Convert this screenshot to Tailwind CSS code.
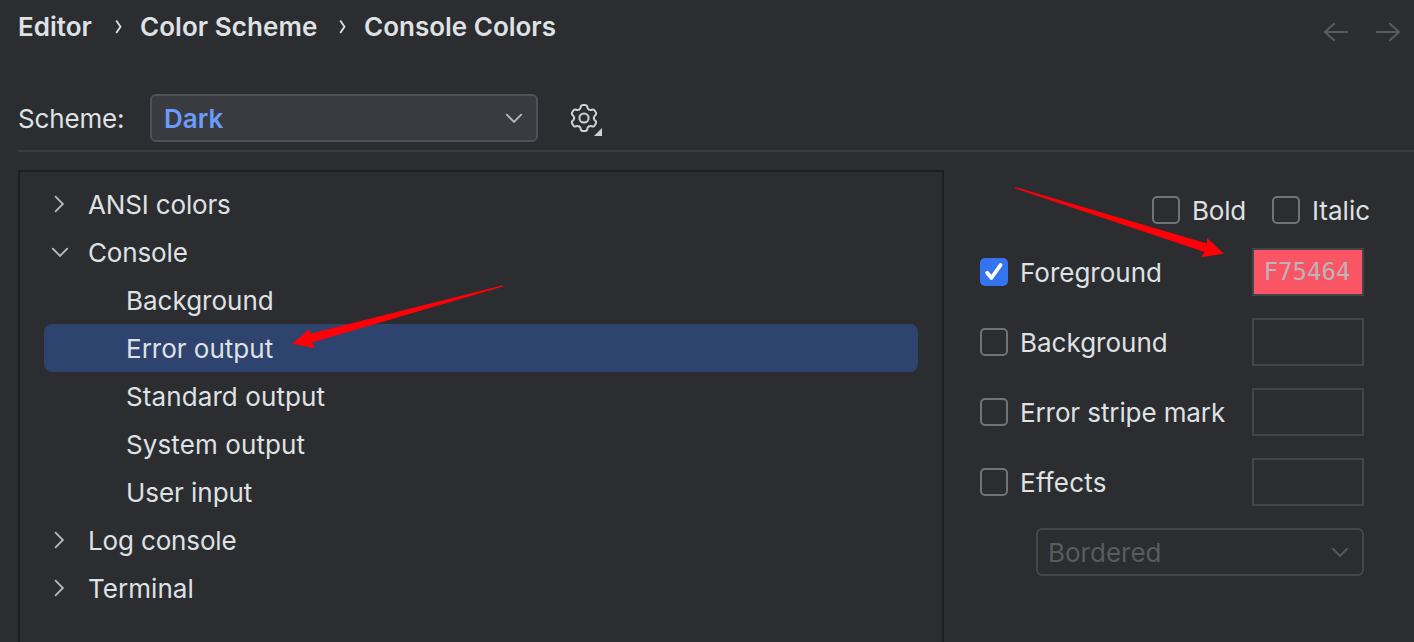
<!DOCTYPE html>
<html lang="en">
<head>
<meta charset="utf-8">
<title>Console Colors</title>
<script src="https://cdn.jsdelivr.net/npm/@tailwindcss/browser@4"></script>
</head>
<body class="relative h-[642px] w-[1414px] overflow-hidden bg-[#2b2d30] font-['Inter',sans-serif] text-[26px] font-[430] leading-[48px] text-[#dfe1e5]">
<svg class="hidden">
  <symbol id="right" viewBox="0 0 32 32"><path d="M11.6 8.7 18.9 16 11.6 23.3" fill="none" stroke="currentColor" stroke-width="1.9" stroke-linecap="round"/></symbol>
  <symbol id="down" viewBox="0 0 32 32"><path d="M8.8 12.7 16 19.9 23.2 12.7" fill="none" stroke="currentColor" stroke-width="1.9" stroke-linecap="round"/></symbol>
  <symbol id="crumb" viewBox="0 0 8 16"><path d="M1.2 1.5 5.5 7.7 1.2 13.9" fill="none" stroke="currentColor" stroke-width="1.8"/></symbol>
</svg>

<header class="flex h-[94px] items-start justify-between pl-[18px] pr-[13px]">
  <nav class="flex items-center pt-[3px] font-semibold">
    <span class="w-[97px]">Editor</span>
    <svg class="h-4 w-2"><use href="#crumb"/></svg>
    <span class="ml-[17px] w-[200px] whitespace-nowrap tracking-[0.06px]">Color Scheme</span>
    <svg class="-ml-px h-4 w-2"><use href="#crumb"/></svg>
    <span class="ml-[17px] whitespace-nowrap">Console Colors</span>
  </nav>
  <div class="flex gap-[26px] pt-5 text-[#5a5b5d]">
    <svg class="h-6 w-[26px]" fill="none" stroke="currentColor" stroke-width="2" stroke-linecap="round"><path d="M24 12H2M11 3.7 2 12l9 8.3"/></svg>
    <svg class="h-6 w-[26px]" fill="none" stroke="currentColor" stroke-width="2" stroke-linecap="round"><path d="M2 12h22M15 3.7 24 12l-9 8.3"/></svg>
  </div>
</header>

<section class="ml-[18px] flex h-[58px] items-start border-b-2 border-[#393b40]">
  <label class="w-[132px] pt-px tracking-[-0.15px]">Scheme:</label>
  <div class="flex h-12 w-[388px] items-center justify-between rounded-md border-2 border-[#4e5157] bg-[#393b40] pl-3 pr-1.5">
    <span class="pt-0.5 font-semibold text-[#6b9bfa]">Dark</span>
    <svg class="size-8 text-[#b4b8bf]"><use href="#down"/></svg>
  </div>
  <svg class="ml-[30px] mt-2 h-9 w-[36px] text-[#ced0d6]" viewBox="-16 -16 36 36">
    <g fill="none" stroke="currentColor" stroke-width="2" stroke-linecap="round">
      <path id="gt" d="M-4.9-8.49C-2.9-9.6-3.6-10.8-3-12C-2.6-12.8-2-13-1.2-13H1.2C2-13 2.6-12.8 3-12C3.6-10.8 2.9-9.6 4.9-8.49"/>
      <use href="#gt" transform="rotate(60)"/><use href="#gt" transform="rotate(120)"/><use href="#gt" transform="rotate(180)"/><use href="#gt" transform="rotate(240)"/><use href="#gt" transform="rotate(300)"/>
      <circle r="4.6"/>
    </g>
    <path d="M18 10v8h-8z" fill="currentColor"/>
  </svg>
</section>

<main class="ml-[18px] mt-[18px] flex h-[472px]">
  <ul class="h-[480px] w-[926px] border-2 border-[#1e1f22] px-6 pt-2">
    <li class="flex h-12 items-center"><svg class="size-8 text-[#b4b8bf]"><use href="#right"/></svg><span class="ml-3 pt-0.5 tracking-[-0.15px]">ANSI colors</span></li>
    <li class="flex h-12 items-center"><svg class="size-8 text-[#b4b8bf]"><use href="#down"/></svg><span class="ml-3 pt-0.5 tracking-[-0.15px]">Console</span></li>
    <li class="h-12 pl-[82px] pt-px">Background</li>
    <li class="h-12 rounded-lg bg-[#2e436e] pl-[82px] pt-px">Error output</li>
    <li class="h-12 pl-[82px] pt-px tracking-[0.1px]">Standard output</li>
    <li class="h-12 pl-[82px] pt-px tracking-[0.1px]">System output</li>
    <li class="h-12 pl-[82px] pt-px tracking-[-0.05px]">User input</li>
    <li class="flex h-12 items-center"><svg class="size-8 text-[#b4b8bf]"><use href="#right"/></svg><span class="ml-3 pt-0.5 tracking-[-0.15px]">Log console</span></li>
    <li class="flex h-12 items-center"><svg class="size-8 text-[#b4b8bf]"><use href="#right"/></svg><span class="ml-3 pt-0.5 tracking-[0.05px]">Terminal</span></li>
  </ul>

  <div class="ml-9 w-[434px] pt-4">
    <div class="flex h-[62px] pl-[172px]">
      <label class="flex h-12 w-[120px] items-center gap-3"><i class="size-7 rounded-[5px] border-2 border-[#6f737a]"></i><span class="pt-0.5 tracking-[-0.2px]">Bold</span></label>
      <label class="flex h-12 items-center gap-3"><i class="size-7 rounded-[5px] border-2 border-[#6f737a]"></i><span class="pt-0.5">Italic</span></label>
    </div>
    <div class="flex h-[70px] w-[384px] items-start justify-between">
      <label class="flex h-12 items-center gap-3"><svg class="size-7 rounded-[5px] bg-[#3574f0]" fill="none" stroke="#fff" stroke-width="3.8" stroke-linecap="round" stroke-linejoin="round"><path d="M7.2 14.8 11.4 20 20.6 7"/></svg><span class="pt-0.5">Foreground</span></label>
      <div class="h-12 w-28 border-2 border-[#43454a] bg-[#fa5565] pr-0.5 text-center font-['DejaVu_Sans_Mono',monospace] text-[24px] leading-[45px] text-[#bcb4b8]">F75464</div>
    </div>
    <div class="flex h-[70px] w-[384px] items-start justify-between">
      <label class="flex h-12 items-center gap-3"><i class="size-7 rounded-[5px] border-2 border-[#6f737a]"></i><span class="pt-0.5">Background</span></label>
      <div class="h-12 w-28 border-2 border-[#43454a]"></div>
    </div>
    <div class="flex h-[70px] w-[384px] items-start justify-between">
      <label class="flex h-12 items-center gap-3"><i class="size-7 rounded-[5px] border-2 border-[#6f737a]"></i><span class="pt-0.5 tracking-[-0.1px]">Error stripe mark</span></label>
      <div class="h-12 w-28 border-2 border-[#43454a]"></div>
    </div>
    <div class="flex h-[70px] w-[384px] items-start justify-between">
      <label class="flex h-12 items-center gap-3"><i class="size-7 rounded-[5px] border-2 border-[#6f737a]"></i><span class="pt-0.5 tracking-[0.25px]">Effects</span></label>
      <div class="h-12 w-28 border-2 border-[#43454a]"></div>
    </div>
    <div class="ml-14 flex h-12 w-[328px] items-center justify-between rounded-md border-2 border-[#43454a] pl-2.5 pr-1.5 text-[#5a5b5f]">
      <span class="pt-0.5">Bordered</span>
      <svg class="size-8"><use href="#down"/></svg>
    </div>
  </div>
</main>

<svg class="pointer-events-none absolute inset-0 h-[642px] w-[1414px]" fill="#ff0008">
  <path d="M502.8 285.3 310 333.8 309.5 329 292 343.8 315 348.2 312 342.5 503 286.5Z"/>
  <path d="M1015.2 187 1207 243.5 1207 238 1224 253.7 1201 257.3 1204.5 252 1015 188.3Z"/>
</svg>
</body>
</html>
